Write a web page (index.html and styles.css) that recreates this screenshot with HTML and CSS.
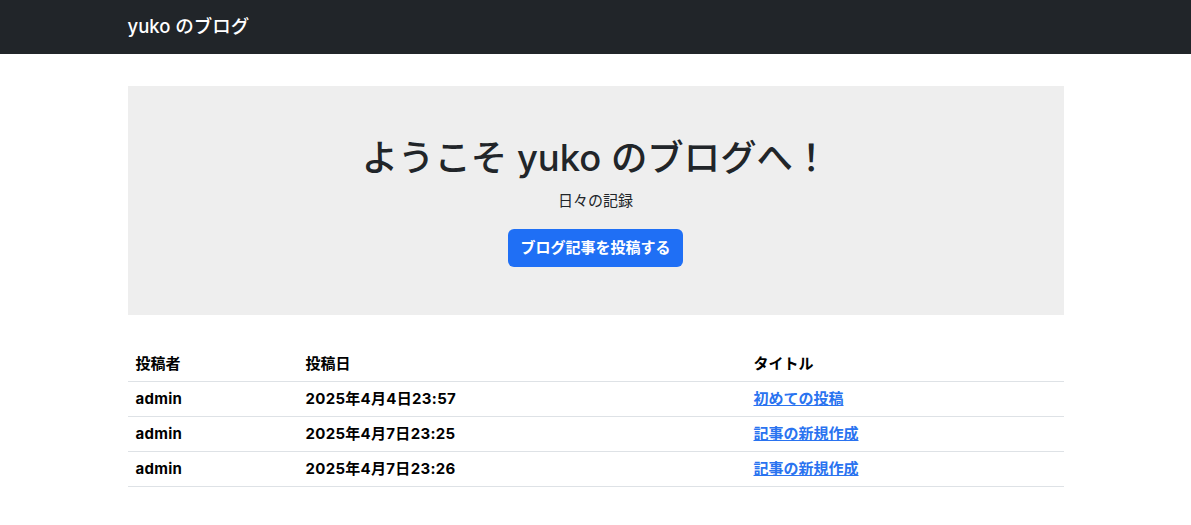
FILE: index.html
```html
<!DOCTYPE html>
<html lang="ja">
<head>
<meta charset="utf-8">
<title>yuko のブログ</title>
<link rel="stylesheet" href="styles.css">
</head>
<body>
<nav class="navbar">
  <div class="container">
    <a class="brand" href="#">yuko のブログ</a>
  </div>
</nav>
<main class="container">
  <section class="hero">
    <h1 class="hero-title">ようこそ yuko のブログへ！</h1>
    <p class="hero-lead">日々の記録</p>
    <a class="btn" href="#">ブログ記事を投稿する</a>
  </section>
  <table class="posts">
    <colgroup>
      <col class="c1"><col class="c2"><col class="c3">
    </colgroup>
    <thead>
      <tr><th>投稿者</th><th>投稿日</th><th>タイトル</th></tr>
    </thead>
    <tbody>
      <tr><td>admin</td><td>2025年4月4日23:57</td><td><a href="#">初めての投稿</a></td></tr>
      <tr><td>admin</td><td>2025年4月7日23:25</td><td><a href="#">記事の新規作成</a></td></tr>
      <tr><td>admin</td><td>2025年4月7日23:26</td><td><a href="#">記事の新規作成</a></td></tr>
    </tbody>
  </table>
</main>
</body>
</html>
```
FILE: styles.css
```css
* { box-sizing: border-box; }
body {
  margin: 0;
  font-family: "Inter", "Noto Sans CJK JP", sans-serif;
  font-size: 15px;
  color: #212529;
  background: #fff;
}
.container {
  width: 960px;
  margin: 0 auto;
  padding: 0 12px;
}
.navbar {
  background: #212529;
  height: 54px;
  display: flex;
  align-items: center;
}
.navbar .container { display: flex; align-items: center; }
.brand {
  color: #fff;
  text-decoration: none;
  font-size: 18.5px;
  font-weight: 500;
  line-height: 24px;
  margin-top: -2px;
}
.hero {
  margin-top: 32px;
  background: #eeeeee;
  padding: 51px 16px 48px;
  text-align: center;
}
.hero-title {
  margin: 0 0 10px;
  font-size: 36.4px;
  line-height: 43px;
  font-weight: 500;
  color: #212529;
}
.hero-lead {
  margin: 0 0 17px;
  font-size: 15px;
  line-height: 22px;
}
.btn {
  display: inline-block;
  background: #1f6ff5;
  color: #fff;
  font-weight: 700;
  font-size: 15px;
  line-height: 22px;
  padding: 8px 12px;
  border-radius: 6px;
  text-decoration: none;
}
.posts {
  margin-top: 32px;
  width: 100%;
  border-collapse: collapse;
  table-layout: fixed;
}
.c1 { width: 170px; }
.c2 { width: 448px; }
.c3 { width: 318px; }
.posts th, .posts td {
  text-align: left;
  padding: 8px 8px;
  line-height: 18px;
  font-size: 15px;
  font-weight: 700;
  color: #000;
  border-bottom: 1px solid #dee2e6;
}
.posts td:first-child, .posts td:nth-child(2) {
  letter-spacing: 0.3px;
}
.posts a {
  color: #2a73f0;
  text-decoration: underline;
}
```
